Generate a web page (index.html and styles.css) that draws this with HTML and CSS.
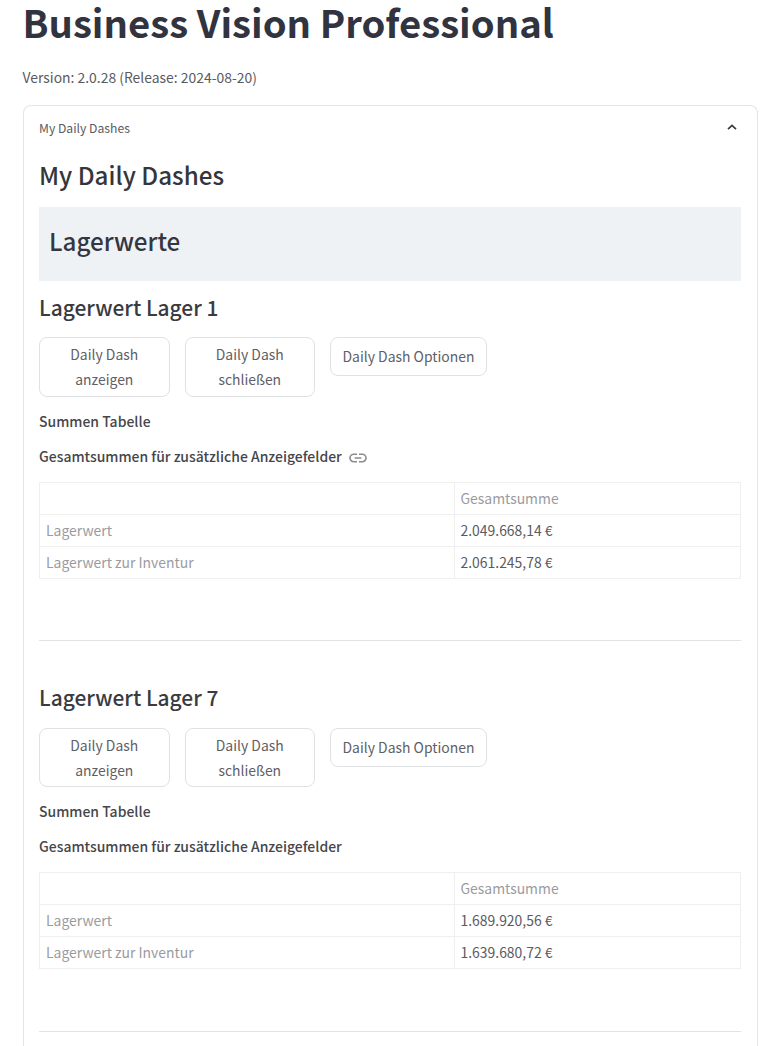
FILE: index.html
```html
<!DOCTYPE html>
<html lang="de">
<head>
<meta charset="utf-8">
<title>Business Vision Professional</title>
<link rel="stylesheet" href="styles.css">
</head>
<body>
<main class="page">
  <h1 class="title"><span>Business Vision Professional</span></h1>
  <p class="version"><span>Version: 2.0.28 (Release: 2024-08-20)</span></p>
  <section class="panel">
    <header class="panel-head">
      <span>My Daily Dashes</span>
      <svg class="chevron" viewBox="0 0 10 6"><path d="M1 5.1 5 1.3 9 5.1"/></svg>
    </header>
    <h2 class="heading"><span>My Daily Dashes</span></h2>
    <div class="banner"><span>Lagerwerte</span></div>

    <article class="dash">
      <h3 class="dash-title"><span>Lagerwert Lager 1</span></h3>
      <div class="actions">
        <button class="btn">Daily Dash<br>anzeigen</button>
        <button class="btn">Daily Dash<br>schließen</button>
        <button class="btn btn-single">Daily Dash Optionen</button>
      </div>
      <h4 class="label"><span>Summen Tabelle</span></h4>
      <h4 class="label label-total"><span>Gesamtsummen für zusätzliche Anzeigefelder</span>
        <svg class="link" viewBox="0 0 18 10"><path d="M8 1.2H4.8a3.8 3.8 0 0 0 0 7.6H8M10 1.2h3.2a3.8 3.8 0 0 1 0 7.6H10M5.6 5h6.8"/></svg>
      </h4>
      <table class="totals">
        <tr><th></th><th>Gesamtsumme</th></tr>
        <tr><th>Lagerwert</th><td>2.049.668,14 €</td></tr>
        <tr><th>Lagerwert zur Inventur</th><td>2.061.245,78 €</td></tr>
      </table>
      <hr class="rule">
    </article>

    <article class="dash dash-next">
      <h3 class="dash-title"><span>Lagerwert Lager 7</span></h3>
      <div class="actions">
        <button class="btn">Daily Dash<br>anzeigen</button>
        <button class="btn">Daily Dash<br>schließen</button>
        <button class="btn btn-single">Daily Dash Optionen</button>
      </div>
      <h4 class="label"><span>Summen Tabelle</span></h4>
      <h4 class="label label-total"><span>Gesamtsummen für zusätzliche Anzeigefelder</span></h4>
      <table class="totals">
        <tr><th></th><th>Gesamtsumme</th></tr>
        <tr><th>Lagerwert</th><td>1.689.920,56 €</td></tr>
        <tr><th>Lagerwert zur Inventur</th><td>1.639.680,72 €</td></tr>
      </table>
      <hr class="rule">
    </article>
  </section>
</main>
</body>
</html>
```
FILE: styles.css
```css
* { box-sizing: border-box; margin: 0; padding: 0; }
body {
  background: #fff;
  color: #5a5b60;
  font: 400 13.93px/24px "Noto Sans CJK SC", "Noto Sans", sans-serif;
  white-space: nowrap;
}
.page { height: 1046px; overflow: hidden; padding: 0 10.5px 0 22.5px; }
.title { height: 44px; font-size: 38.25px; line-height: 44px; font-weight: 700; color: #31333f; }
.version { margin-top: 21px; font-size: 13.92px; }
.panel {
  margin-top: 16px;
  height: 941px;
  padding: 0 15.5px;
  border: 1px solid #e4e5e7;
  border-bottom: 0;
  border-radius: 8px 8px 0 0;
}
.panel-head {
  display: flex;
  align-items: center;
  justify-content: space-between;
  height: 43px;
  font-size: 12.2px;
}
.chevron { width: 10px; height: 6px; margin: 0 4.5px 1px 0; fill: none; stroke: #3a3b40; stroke-width: 1.7; }
.heading { height: 58px; font-size: 24.2px; line-height: 52px; font-weight: 500; color: #35363c; }
.banner {
  height: 74px;
  padding-left: 10px;
  font-size: 24.2px;
  line-height: 67px;
  font-weight: 500;
  color: #35363f;
  background: #eef2f5;
}
.dash { height: 390px; display: flex; flex-direction: column; }
.dash-title { height: 56px; font-size: 20.95px; line-height: 53px; font-weight: 500; color: #3a3b40; }
.actions { display: flex; align-items: flex-start; gap: 15px; height: 60px; }
.btn {
  width: 130.5px;
  height: 60px;
  border: 1px solid #e0e1e3;
  border-radius: 8px;
  background: #fff;
  color: #5f6065;
  font: inherit;
  line-height: 25px;
}
.btn-single { width: 157px; height: 39px; }
.label { display: flex; align-items: center; height: 24px; margin-top: 12px; font-size: 13.96px; font-weight: 500; color: #45464b; }
.label-total { margin-top: 10.5px; }
.link { width: 18px; height: 10px; margin: 4px 0 0 7.5px; fill: none; stroke: #8b8b8e; stroke-width: 1.6; }
.totals { margin-top: 14.5px; width: 100%; table-layout: fixed; border-collapse: collapse; }
.totals th, .totals td { height: 32px; padding: 0 6px 1px 5.5px; border: 1px solid #efeff0; text-align: left; line-height: 24px; }
.totals th { font-weight: 400; color: #9b9b9e; }
.totals th:first-child { width: 415px; padding-left: 6px; }
.rule { border: 0; height: 1px; margin-top: 61px; background: #e3e3e5; }
.dash-next .dash-title { height: 57px; }
.dash-next .actions { height: 59px; }
.dash-next .btn:not(.btn-single) { height: 59px; }
.dash-next .totals { margin-top: 14px; }
.dash-next .rule { margin-top: 62px; }
```
